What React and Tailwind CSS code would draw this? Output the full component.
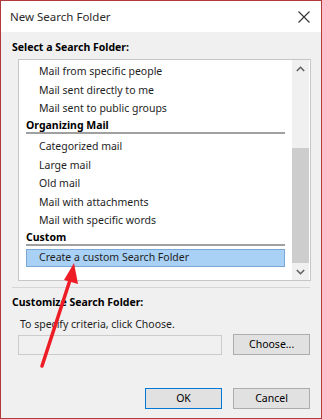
import React from "react";

const groups = [
  { items: ["Mail from specific people", "Mail sent directly to me", "Mail sent to public groups"] },
  {
    header: "Organizing Mail",
    items: ["Categorized mail", "Large mail", "Old mail", "Mail with attachments", "Mail with specific words"],
  },
];

const Item = ({ label }) => (
  <div className="h-[18.5px] leading-[18.5px] pl-[20px] text-[10.5px] text-[#1e1e1e] whitespace-nowrap">{label}</div>
);

const Header = ({ label }) => (
  <div className="mt-[1.5px] pl-[7px] w-[266px]">
    <div className="h-[13px] leading-[13px] text-[10.5px] font-bold text-black">{label}</div>
    <div className="h-[2px] bg-[#a0a0a0] w-[259px]" />
  </div>
);

const Button = ({ children, primary }) => (
  <button
    className={`w-[77px] h-[21px] text-[10.5px] text-black bg-[#e1e1e1] border ${
      primary ? "border-[#0078d7]" : "border-[#adadad]"
    }`}
  >
    {children}
  </button>
);

export default function App() {
  return (
    <div
      className="relative w-[322px] h-[419px] border border-[#b23a3a] flex flex-col overflow-hidden"
      style={{ fontFamily: '"Noto Sans", "Open Sans", sans-serif' }}
    >
      {/* Title bar */}
      <div className="h-[31px] bg-white flex items-center justify-between pl-[9px] pr-[11px]">
        <span className="text-[11.5px] text-[#2b2b2b]">New Search Folder</span>
        <svg width="12" height="12" viewBox="0 0 12 12">
          <path d="M0.5 0.5 L11.5 11.5 M11.5 0.5 L0.5 11.5" stroke="#333" strokeWidth="1.1" fill="none" />
        </svg>
      </div>

      {/* Body */}
      <div className="flex-1 bg-[#f0f0f0] px-[11px] pt-[7px]">
        <div className="h-[16px] leading-[16px] text-[10.5px] font-bold text-black">Select a Search Folder:</div>

        {/* List box */}
        <div className="mt-[4px] ml-[6px] w-[293px] h-[222px] border border-[#c6c6c6] bg-white flex">
          <div className="flex-1 pt-[2px] overflow-hidden">
            {groups.map((g, i) => (
              <div key={i}>
                {g.header && <Header label={g.header} />}
                <div className={g.header ? "mt-[3px]" : ""}>
                  {g.items.map((it) => (
                    <Item key={it} label={it} />
                  ))}
                </div>
              </div>
            ))}
            <Header label="Custom" />
            <div className="mt-[3px] ml-[7px] w-[259px] h-[18px] bg-[#a9d1f5] border border-[#7aa7d4] flex items-center pl-[12px] text-[10.5px] text-[#1e1e1e] whitespace-nowrap">
              Create a custom Search Folder
            </div>
          </div>

          {/* Scrollbar */}
          <div className="w-[17px] bg-[#f0f0f0] flex flex-col mr-[1px]">
            <div className="h-[17px] flex items-center justify-center">
              <svg width="9" height="6" viewBox="0 0 9 6">
                <path d="M0.8 5 L4.5 1.3 L8.2 5" stroke="#606060" strokeWidth="1.6" fill="none" />
              </svg>
            </div>
            <div className="flex-1 flex flex-col">
              <div className="h-[71px]" />
              <div className="flex-1 bg-[#cdcdcd]" />
            </div>
            <div className="h-[17px] flex items-center justify-center">
              <svg width="9" height="6" viewBox="0 0 9 6">
                <path d="M0.8 1 L4.5 4.7 L8.2 1" stroke="#606060" strokeWidth="1.6" fill="none" />
              </svg>
            </div>
          </div>
        </div>

        <div className="mt-[6px] h-[1px] bg-[#d5d5d5] w-[298px]" />

        <div className="mt-[6px] h-[16px] leading-[16px] text-[10.5px] font-bold text-black">Customize Search Folder:</div>
        <div className="mt-[6px] ml-[8px] h-[16px] leading-[16px] text-[10.5px] text-[#1e1e1e]">
          To specify criteria, click Choose.
        </div>

        <div className="mt-[2px] ml-[6px] flex items-center gap-[11px]">
          <div className="w-[205px] h-[20px] border border-[#cccccc] bg-[#f0f0f0]" />
          <Button>Choose...</Button>
        </div>

        <div className="mt-[33px] flex justify-end gap-[11px]">
          <Button primary>OK</Button>
          <Button>Cancel</Button>
        </div>
      </div>

      {/* Annotation arrow */}
      <svg className="absolute left-0 top-0 pointer-events-none" width="322" height="419">
        <line x1="41" y1="365" x2="70" y2="276" stroke="#ee1c24" strokeWidth="3.5" strokeLinecap="round" />
        <polygon points="73,262 63,279 77,283" fill="#ee1c24" />
      </svg>
    </div>
  );
}
